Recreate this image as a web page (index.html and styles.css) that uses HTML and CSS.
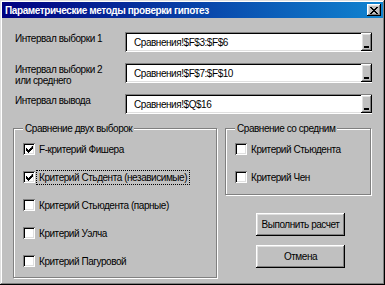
FILE: index.html
```html
<!DOCTYPE html>
<html lang="ru">
<head>
    <meta charset="UTF-8">
    <title>Параметрические методы проверки гипотез</title>
    <link rel="stylesheet" href="styles.css">
</head>
<body>
    <div class="window">
        <div class="titlebar">
            <span class="title">Параметрические методы проверки гипотез</span>
            <span class="close">
                <svg width="8" height="7" viewBox="0 0 8 7"><path d="M0 0h2v1h1v1h2v-1h1v-1h2v1h-1v1h-1v1h-1v1h1v1h1v1h1v1h-2v-1h-1v-1h-2v1h-1v1h-2v-1h1v-1h1v-1h1v-1h-1v-1h-1v-1h-1z" fill="#000"/></svg>
            </span>
        </div>
        <div class="content">
            <div class="fields">
                <div class="field-label">Интервал выборки 1</div>
                <div class="refedit">
                    <span class="ref-text">Сравнения!$F$3:$F$6</span>
                    <span class="ref-btn"><i></i></span>
                </div>
                <div class="field-label">Интервал выборки 2<br>или среднего</div>
                <div class="refedit">
                    <span class="ref-text">Сравнения!$F$7:$F$10</span>
                    <span class="ref-btn"><i></i></span>
                </div>
                <div class="field-label">Интервал вывода</div>
                <div class="refedit">
                    <span class="ref-text">Сравнения!$Q$16</span>
                    <span class="ref-btn"><i></i></span>
                </div>
            </div>
            <div class="groups">
                <fieldset class="group group-two">
                    <legend>Сравнение двух выборок</legend>
                    <div class="check">
                        <span class="box"><svg width="7" height="7" viewBox="0 0 7 7"><path d="M6 0h1v3h-1v1h-1v1h-1v1h-1v1h-1v-1h-1v-1h-1v-3h1v1h1v1h1v-1h1v-1h1z" fill="#000"/></svg></span>
                        <span class="check-text">F-критерий Фишера</span>
                    </div>
                    <div class="check">
                        <span class="box"><svg width="7" height="7" viewBox="0 0 7 7"><path d="M6 0h1v3h-1v1h-1v1h-1v1h-1v1h-1v-1h-1v-1h-1v-3h1v1h1v1h1v-1h1v-1h1z" fill="#000"/></svg></span>
                        <span class="check-text focused">Критерий Стьдента (независимые)</span>
                    </div>
                    <div class="check">
                        <span class="box"></span>
                        <span class="check-text">Критерий Стьюдента (парные)</span>
                    </div>
                    <div class="check">
                        <span class="box"></span>
                        <span class="check-text">Критерий Уэлча</span>
                    </div>
                    <div class="check">
                        <span class="box"></span>
                        <span class="check-text">Критерий Пагуровой</span>
                    </div>
                </fieldset>
                <div class="side">
                    <fieldset class="group group-mean">
                        <legend>Сравнение со средним</legend>
                        <div class="check">
                            <span class="box"></span>
                            <span class="check-text">Критерий Стьюдента</span>
                        </div>
                        <div class="check">
                            <span class="box"></span>
                            <span class="check-text">Критерий Чен</span>
                        </div>
                    </fieldset>
                    <button class="btn btn-run">Выполнить расчет</button>
                    <button class="btn">Отмена</button>
                </div>
            </div>
        </div>
    </div>
</body>
</html>
```

FILE: styles.css
```css
body {
    margin: 0;
    background: #c0c0c0;
    font-family: "Liberation Sans", Arial, sans-serif;
    font-size: 10px;
    letter-spacing: -0.45px;
    color: #000;
}
.window {
    width: 385px;
    height: 285px;
    box-sizing: border-box;
    padding: 2px;
    background: #c0c0c0;
    box-shadow: inset -1px -1px #000, inset 1px 1px #dfdfdf, inset -2px -2px #808080, inset 2px 2px #fff;
    display: flex;
    flex-direction: column;
}
.titlebar {
    height: 16px;
    display: flex;
    align-items: center;
    justify-content: space-between;
    padding: 0 2px 0 3px;
    background: linear-gradient(to right, #000080, #1084d0);
}
.title {
    color: #fff;
    font-weight: bold;
    font-size: 10px;
    letter-spacing: -0.4px;
}
.close {
    width: 14px;
    height: 12px;
    box-sizing: border-box;
    display: flex;
    align-items: center;
    justify-content: center;
    background: #c0c0c0;
    box-shadow: inset -1px -1px #000, inset 1px 1px #fff, inset -2px -2px #808080, inset 2px 2px #dfdfdf;
}
.content {
    flex: 1;
    padding: 14px 11px 0 11px;
    display: flex;
    flex-direction: column;
}
.fields {
    display: grid;
    grid-template-columns: 110px 247px;
    grid-auto-rows: 20px;
    row-gap: 11px;
    margin-left: 2px;
}
.field-label {
    padding-top: 1px;
    line-height: 11px;
    white-space: nowrap;
}
.refedit {
    display: flex;
    align-items: center;
    justify-content: space-between;
    background: #fff;
    box-shadow: inset 1px 1px #808080, inset -1px -1px #fff, inset 2px 2px #000, inset -2px -2px #dfdfdf;
    padding: 0 0 0 9px;
}
.ref-text {
    padding-top: 1px;
}
.ref-btn {
    width: 11px;
    height: 18px;
    box-sizing: border-box;
    display: flex;
    align-items: flex-end;
    justify-content: center;
    padding-bottom: 3px;
    background: #c0c0c0;
    box-shadow: inset -1px -1px #000, inset 1px 1px #fff, inset -2px -2px #808080, inset 2px 2px #dfdfdf;
}
.ref-btn i {
    display: block;
    width: 5px;
    height: 2px;
    background: #000;
}
.groups {
    display: flex;
    gap: 8px;
    margin-top: 8px;
}
.group {
    margin: 0;
    padding: 0 0 2px 9px;
    border: 1px solid #808080;
    box-shadow: inset 1px 1px #fff, 1px 1px #fff;
}
.group legend {
    margin-left: 0;
    padding: 0 2px;
    line-height: 13px;
    background: #c0c0c0;
}
.group-two {
    width: 204px;
    height: 156px;
    box-sizing: border-box;
}
.group-mean {
    width: 146px;
    box-sizing: border-box;
    padding-bottom: 3px;
}
.check {
    height: 28px;
    display: flex;
    align-items: center;
}
.box {
    width: 12px;
    height: 12px;
    box-sizing: border-box;
    flex: none;
    display: flex;
    align-items: center;
    justify-content: center;
    background: #fff;
    box-shadow: inset 1px 1px #808080, inset -1px -1px #fff, inset 2px 2px #000, inset -2px -2px #dfdfdf;
}
.check-text {
    margin-left: 1px;
    padding: 1px 2px;
    border: 1px dotted transparent;
    white-space: nowrap;
}
.check-text.focused {
    border-color: #000;
}
.side {
    display: flex;
    flex-direction: column;
}
.btn {
    width: 89px;
    height: 23px;
    margin: 9px 0 0 31px;
    padding: 0;
    border: none;
    background: #c0c0c0;
    font-family: "Liberation Sans", Arial, sans-serif;
    font-size: 10px;
    letter-spacing: -0.45px;
    color: #000;
    box-shadow: inset -1px -1px #000, inset 1px 1px #fff, inset -2px -2px #808080, inset 2px 2px #dfdfdf;
}
.btn-run {
    margin-top: 18px;
}
```
